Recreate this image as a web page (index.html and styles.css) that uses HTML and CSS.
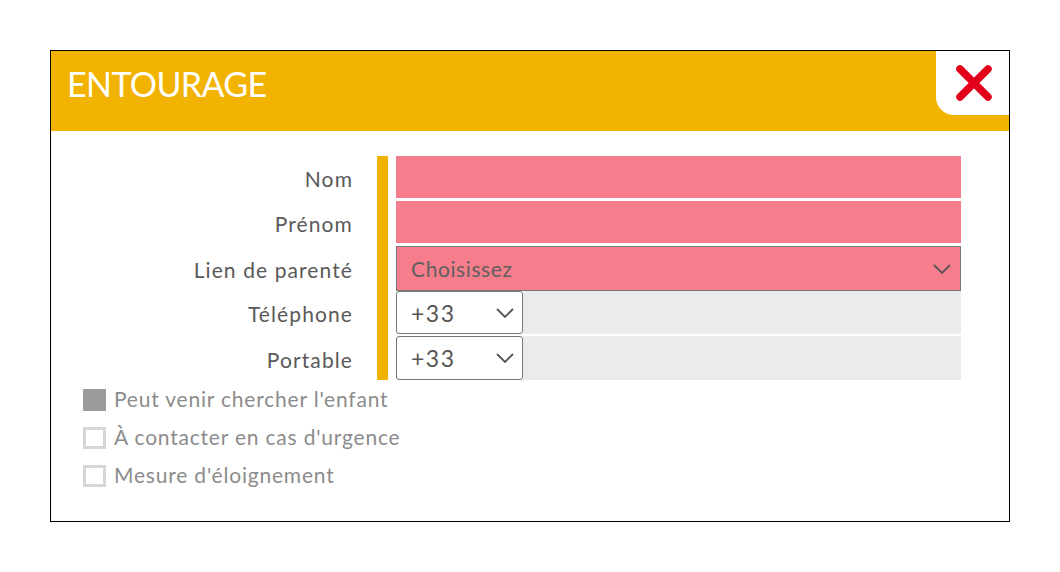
FILE: index.html
```html
<!DOCTYPE html>
<html lang="fr">
<head>
<meta charset="utf-8">
<title>Entourage</title>
<link rel="stylesheet" href="styles.css">
</head>
<body>
<div class="dialog">
  <div class="header">
    <h1 class="title">ENTOURAGE</h1>
    <div class="close">
      <svg width="38" height="38" viewBox="0 0 38 38"><path d="M5 5 L33 33 M33 5 L5 33" stroke="#e3001b" stroke-width="7.5" stroke-linecap="round"/></svg>
    </div>
  </div>
  <div class="form">
    <div class="labels">
      <div class="lab r1">Nom</div>
      <div class="lab r2">Prénom</div>
      <div class="lab r3">Lien de parenté</div>
      <div class="lab r4">Téléphone</div>
      <div class="lab r5">Portable</div>
    </div>
    <div class="bar"></div>
    <div class="fields">
      <div class="input pink r1"></div>
      <div class="input pink r2"></div>
      <div class="select pink r3"><span class="ph">Choisissez</span>
        <svg class="chev" width="18" height="10" viewBox="0 0 18 10"><path d="M1 1 L9 9 L17 1" fill="none" stroke="#555" stroke-width="1.8"/></svg>
      </div>
      <div class="phone r4">
        <div class="code"><span>+33</span><svg class="chev" width="18" height="10" viewBox="0 0 18 10"><path d="M1 1 L9 9 L17 1" fill="none" stroke="#555" stroke-width="1.8"/></svg></div>
        <div class="num"></div>
      </div>
      <div class="phone r5">
        <div class="code"><span>+33</span><svg class="chev" width="18" height="10" viewBox="0 0 18 10"><path d="M1 1 L9 9 L17 1" fill="none" stroke="#555" stroke-width="1.8"/></svg></div>
        <div class="num"></div>
      </div>
    </div>
  </div>
  <div class="checks">
    <div class="check"><span class="box on"></span><span class="ctext">Peut venir chercher l'enfant</span></div>
    <div class="check"><span class="box"></span><span class="ctext">À contacter en cas d'urgence</span></div>
    <div class="check"><span class="box"></span><span class="ctext">Mesure d'éloignement</span></div>
  </div>
</div>
</body>
</html>
```

FILE: styles.css
```css
* { box-sizing: border-box; }
html, body { margin: 0; padding: 0; background: #fff; }
body { font-family: "Lato", "Open Sans", sans-serif; }
.dialog {
  margin: 50px 0 0 50px;
  width: 960px;
  height: 472px;
  border: 1px solid #000;
  background: #fff;
}
.header {
  height: 80px;
  background: #f2b300;
  display: flex;
  justify-content: space-between;
  align-items: flex-start;
}
.title {
  margin: 0;
  padding: 16px 0 0 16px;
  color: #fff;
  font-weight: 400;
  font-size: 34px;
  line-height: 34px;
  letter-spacing: -0.6px;
}
.close {
  width: 73px;
  height: 64px;
  background: #fff;
  border-bottom-left-radius: 18px;
  display: flex;
  align-items: center;
  justify-content: center;
  padding-left: 2px;
}
.form {
  display: flex;
  margin-top: 25px;
}
.labels {
  width: 301px;
  display: flex;
  flex-direction: column;
  text-align: right;
  color: #595959;
  font-size: 21px;
  letter-spacing: 1.1px;
}
.lab { display: flex; align-items: center; justify-content: flex-end; padding-top: 2px; margin-right: -1px; }
.bar { width: 11px; margin-left: 25px; background: #f2b300; }
.fields { width: 565px; margin-left: 8px; display: flex; flex-direction: column; }
.r1 { height: 42px; }
.r2 { height: 42px; margin-top: 3px; }
.r3 { height: 45px; margin-top: 3px; }
.r4 { height: 43px; }
.r5 { height: 44px; margin-top: 2px; }
.pink { background: #f67e8c; }
.select {
  border: 1px solid #777;
  display: flex;
  align-items: center;
  justify-content: space-between;
  padding: 0 9px 0 14px;
  font-size: 21px;
  letter-spacing: 0.6px;
  color: #5f5f5f;
}
.phone { display: flex; }
.code {
  width: 127px;
  background: #fff;
  border: 1px solid #777;
  border-radius: 3px;
  display: flex;
  align-items: center;
  justify-content: space-between;
  padding: 0 8px 0 14px;
  font-size: 23px;
  letter-spacing: 1.5px;
  color: #555;
}
.num { flex: 1; background: #ebebeb; }
.checks {
  margin-top: 9px;
  padding-left: 32px;
  display: flex;
  flex-direction: column;
  gap: 16px;
}
.check {
  display: flex;
  align-items: center;
  gap: 8px;
  color: #8c8c8c;
  font-size: 21px;
  letter-spacing: 0.8px;
  height: 22px;
}
.ctext { margin-top: -3px; }
.box {
  width: 23px;
  height: 22px;
  border: 3px solid #d6d6d6;
  background: #fff;
}
.box.on { background: #9b9b9b; border-color: #9b9b9b; }
```
